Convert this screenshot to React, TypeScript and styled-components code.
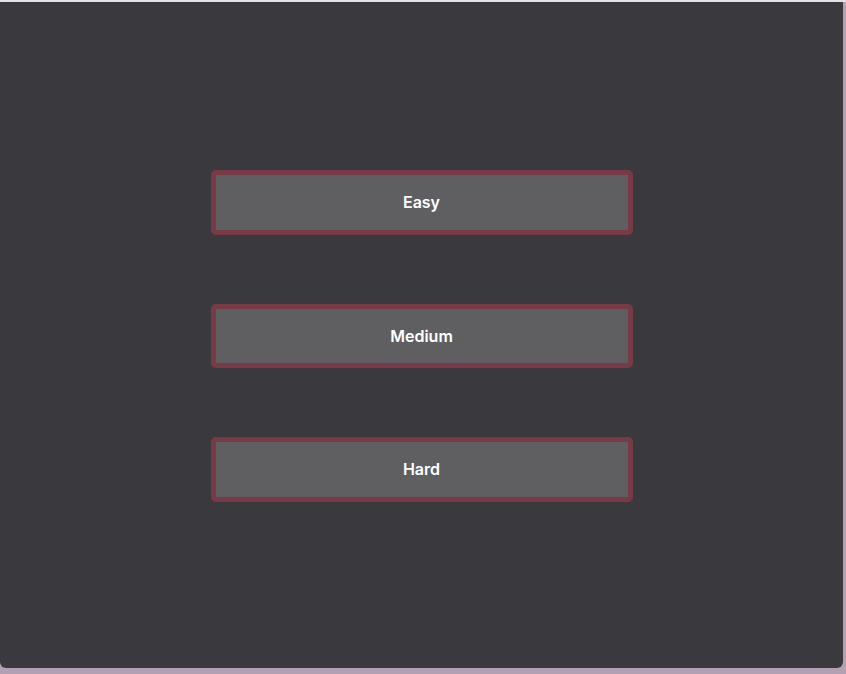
import React from "react";
import styled, { createGlobalStyle } from "styled-components";

const Global = createGlobalStyle`
  html, body { margin: 0; padding: 0; background: #b3a1b3; }
  body { font-family: Inter, "Noto Sans", sans-serif; overflow: hidden; }
`;

const Screen = styled.div`
  width: 846px;
  height: 674px;
  display: flex;
  flex-direction: column;
  background: #b3a1b3;
`;

const TopStrip = styled.div`
  height: 2px;
  background: #e4e2e6;
  flex: none;
`;

const Middle = styled.div`
  display: flex;
  flex: none;
  height: 666px;
`;

const Window = styled.div`
  width: 843px;
  height: 666px;
  background: #3a393e;
  border-radius: 0 0 6px 6px;
  display: flex;
  flex-direction: column;
  align-items: center;
  padding-top: 168px;
  box-sizing: border-box;
  gap: 69px;
`;

const Button = styled.button`
  width: 422px;
  height: 64.5px;
  box-sizing: border-box;
  background: #5f5f61;
  border: 5px solid #793a48;
  border-radius: 5px;
  color: #ffffff;
  font-family: Inter, "Noto Sans", sans-serif;
  font-size: 16px;
  font-weight: 600;
  display: flex;
  align-items: center;
  justify-content: center;
  padding: 0;
  cursor: pointer;
`;

const levels = ["Easy", "Medium", "Hard"];

export default function App() {
  return (
    <>
      <Global />
      <Screen>
        <TopStrip />
        <Middle>
          <Window>
            {levels.map((l) => (
              <Button key={l}>{l}</Button>
            ))}
          </Window>
        </Middle>
      </Screen>
    </>
  );
}
